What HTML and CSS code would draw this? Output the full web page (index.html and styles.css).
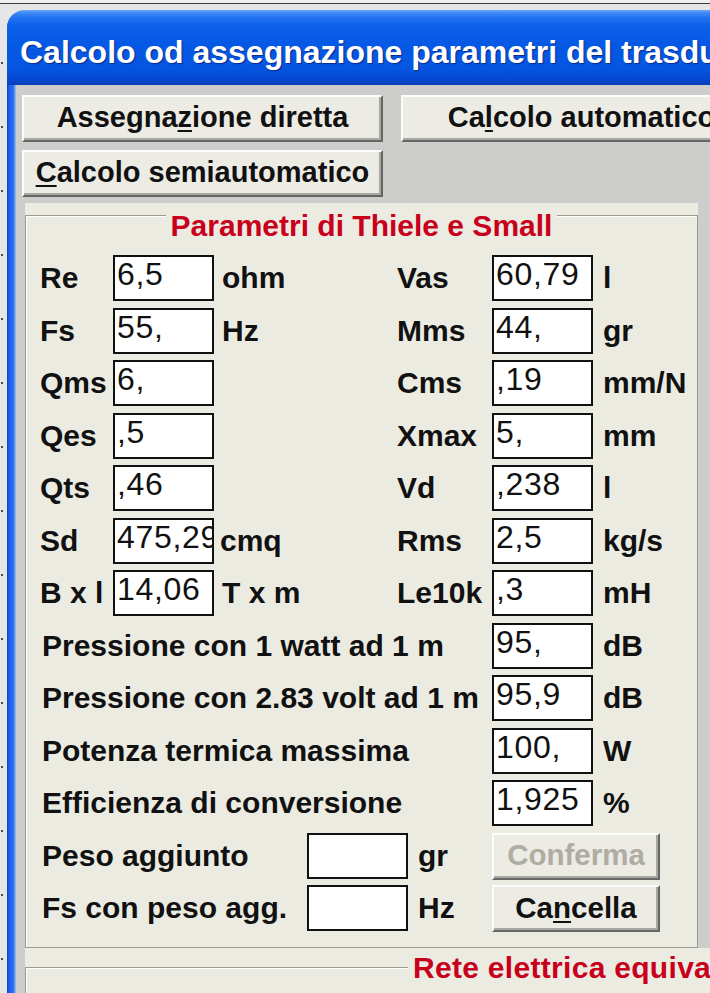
FILE: index.html
```html
<!DOCTYPE html>
<html>
<head>
<meta charset="utf-8">
<link rel="stylesheet" href="styles.css">
</head>
<body>
<div class="desk">
  <div class="window">
    <div class="titlebar">Calcolo od assegnazione parametri del trasduttore</div>
    <div class="client">
      <div class="btnrow">
        <div class="btn wide">Assegna<u>z</u>ione diretta</div>
        <div class="btn wide">Ca<u>l</u>colo automatico</div>
      </div>
      <div class="btnrow second">
        <div class="btn wide"><u>C</u>alcolo semiautomatico</div>
      </div>
      <div class="frame1">
        <div class="group1">
          <div class="cap"><span>Parametri di Thiele e Small</span></div>
          <div class="rows">
            <div class="row">
              <span class="lbl l1">Re</span><div class="fld">6,5</div><span class="unit u1">ohm</span>
              <span class="lbl l2">Vas</span><div class="fld">60,79</div><span class="unit u2">l</span>
            </div>
            <div class="row">
              <span class="lbl l1">Fs</span><div class="fld">55,</div><span class="unit u1">Hz</span>
              <span class="lbl l2">Mms</span><div class="fld">44,</div><span class="unit u2">gr</span>
            </div>
            <div class="row">
              <span class="lbl l1">Qms</span><div class="fld">6,</div><span class="unit u1"></span>
              <span class="lbl l2">Cms</span><div class="fld">,19</div><span class="unit u2">mm/N</span>
            </div>
            <div class="row">
              <span class="lbl l1">Qes</span><div class="fld">,5</div><span class="unit u1"></span>
              <span class="lbl l2">Xmax</span><div class="fld">5,</div><span class="unit u2">mm</span>
            </div>
            <div class="row">
              <span class="lbl l1">Qts</span><div class="fld">,46</div><span class="unit u1"></span>
              <span class="lbl l2">Vd</span><div class="fld">,238</div><span class="unit u2">l</span>
            </div>
            <div class="row">
              <span class="lbl l1">Sd</span><div class="fld">475,29</div><span class="unit u1 tight">cmq</span>
              <span class="lbl l2">Rms</span><div class="fld">2,5</div><span class="unit u2">kg/s</span>
            </div>
            <div class="row">
              <span class="lbl l1">B x l</span><div class="fld">14,06</div><span class="unit u1">T x m</span>
              <span class="lbl l2">Le10k</span><div class="fld">,3</div><span class="unit u2">mH</span>
            </div>
            <div class="row">
              <span class="lbl long">Pressione con 1 watt ad 1 m</span><div class="fld">95,</div><span class="unit u2">dB</span>
            </div>
            <div class="row">
              <span class="lbl long">Pressione con 2.83 volt ad 1 m</span><div class="fld">95,9</div><span class="unit u2">dB</span>
            </div>
            <div class="row">
              <span class="lbl long">Potenza termica massima</span><div class="fld">100,</div><span class="unit u2">W</span>
            </div>
            <div class="row">
              <span class="lbl long">Efficienza di conversione</span><div class="fld">1,925</div><span class="unit u2">%</span>
            </div>
            <div class="row">
              <span class="lbl mid">Peso aggiunto</span><div class="fld"></div><span class="unit u3">gr</span>
              <div class="btn small disabled">Conferma</div>
            </div>
            <div class="row">
              <span class="lbl mid">Fs con peso agg.</span><div class="fld"></div><span class="unit u3">Hz</span>
              <div class="btn small">Ca<u>n</u>cella</div>
            </div>
          </div>
        </div>
      </div>
      <div class="frame2">
        <div class="group2">
          <div class="cap2">Rete elettrica equivalente</div>
        </div>
      </div>
    </div>
  </div>
</div>
</body>
</html>
```

FILE: styles.css
```css
html, body {
  margin: 0;
  padding: 0;
}

body {
  font-family: "Liberation Sans", Arial, sans-serif;
  color: #111;
}

.desk {
  width: 710px;
  height: 993px;
  overflow: hidden;
  box-sizing: border-box;
  padding: 10px 0 0 7px;
  background:
    linear-gradient(#f0f0f0 0 3px, #3c3c3c 3px 4px, transparent 4px) top left / 100% 10px no-repeat,
    repeating-linear-gradient(180deg, transparent 0 62px, #4a4a4a 62px 64px) 1px 0 / 2px 100% no-repeat,
    #e6e6e6;
}

.window {
  width: 780px;
  height: 983px;
  border-radius: 18px 0 0 0;
  overflow: hidden;
  background: linear-gradient(90deg, #0a3ec4 0, #1c5fe8 2px, #2a6cf0 6px, #6f9cec 8px, #b9c6dc 9px);
}

.titlebar {
  height: 75px;
  box-sizing: border-box;
  padding: 14px 0 0 13px;
  line-height: 56px;
  font-size: 32px;
  font-weight: bold;
  letter-spacing: 0;
  color: #fff;
  white-space: nowrap;
  text-shadow: 1px 1px 1px #0b2a8a;
  background: linear-gradient(180deg, #6aa6fa 0, #3f88f5 3px, #2171f0 8px, #0c60ea 16px, #0659e5 45%, #0555e1 78%, #0449d2 92%, #0a3fb5 100%);
}

.client {
  margin-left: 9px;
  height: 908px;
  padding-top: 10px;
  box-sizing: border-box;
  background: #cdcdcb;
}

.btnrow {
  display: flex;
  gap: 18px;
  margin-left: 6px;
}

.btnrow.second {
  margin-top: 8px;
}

.btn {
  box-sizing: border-box;
  height: 47px;
  display: flex;
  align-items: center;
  justify-content: center;
  background: #ecebe4;
  border: 2px solid;
  border-color: #fcfcfc #666664 #666664 #fcfcfc;
  box-shadow: inset -2px -2px #a9a9a4;
  font-size: 29px;
  font-weight: bold;
  white-space: nowrap;
  color: #111;
  padding-bottom: 2px;
}

.btn u {
  text-underline-offset: 3px;
  text-decoration-thickness: 2px;
}

.btn.wide {
  width: 361px;
  flex: none;
}

.btn.small {
  width: 168px;
  flex: none;
  font-size: 29.5px;
}

.btn.disabled {
  color: #aeaca3;
}

.frame1 {
  margin: 6px 0 0 9px;
  width: 673px;
  padding-top: 12px;
  background: #ecebe1;
}

.group1 {
  position: relative;
  border: 1px solid #9b9b94;
  box-shadow: inset 1px 1px #ffffff;
  padding: 39px 0 16px 14px;
}

.cap {
  position: absolute;
  left: 0;
  right: 0;
  top: -5px;
  text-align: center;
}

.cap span {
  background: #ecebe1;
  padding: 0 5px;
  color: #c8001c;
  font-size: 30px;
  font-weight: bold;
  line-height: 30px;
}

.rows {
  display: grid;
  grid-auto-rows: 46px;
  row-gap: 6.5px;
}

.row {
  display: flex;
  align-items: center;
  height: 46px;
}

.lbl {
  flex: none;
  font-size: 30px;
  font-weight: bold;
  line-height: 46px;
  white-space: nowrap;
}

.l1 { width: 73px; }
.l2 { width: 95px; }
.long { width: 450px; padding-left: 2px; }
.mid { width: 265px; padding-left: 2px; }

.fld {
  flex: none;
  width: 101px;
  height: 46px;
  box-sizing: border-box;
  border: 2px solid #111;
  background: #fff;
  padding-left: 2px;
  font-size: 32px;
  letter-spacing: 0.7px;
  line-height: 34px;
  white-space: nowrap;
  overflow: hidden;
  align-self: flex-start;
}

.unit {
  flex: none;
  font-size: 30px;
  font-weight: bold;
  line-height: 46px;
  white-space: nowrap;
}

.u1 { width: 175px; padding-left: 8px; }
.u1.tight { width: 177px; padding-left: 6px; }
.u2 { padding-left: 10px; }
.u3 { width: 74px; padding-left: 10px; }

.row .btn.small {
  align-self: flex-start;
}

.frame2 {
  margin-left: 9px;
  width: 720px;
  height: 60px;
  padding-top: 19px;
  box-sizing: border-box;
  background: #ecebe1;
}

.group2 {
  position: relative;
  height: 60px;
  border-top: 1px solid #9b9b94;
  border-left: 1px solid #9b9b94;
  box-shadow: inset 1px 1px #ffffff;
}

.cap2 {
  position: absolute;
  left: 382px;
  top: -15px;
  padding: 0 5px;
  background: #ecebe1;
  color: #c8001c;
  font-size: 30px;
  font-weight: bold;
  line-height: 30px;
  letter-spacing: 0.3px;
  white-space: nowrap;
}
```
